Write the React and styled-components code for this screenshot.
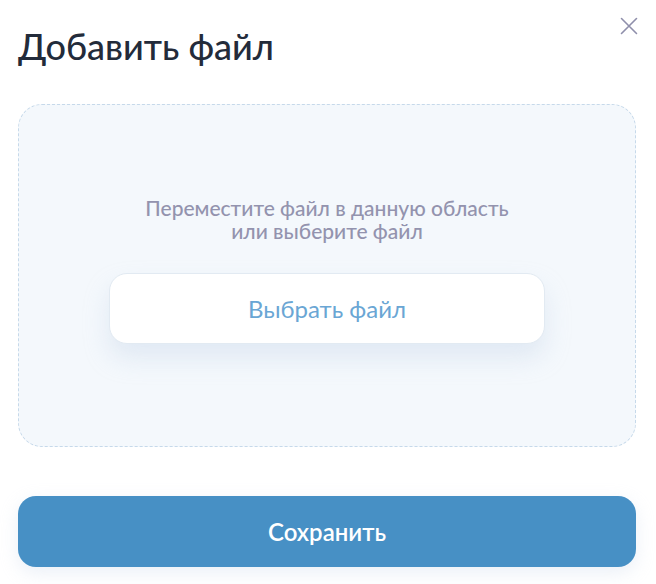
import React from "react";
import styled, { createGlobalStyle } from "styled-components";

// STYLES

const GlobalStyle = createGlobalStyle`
  body {
    margin: 0;
    background: #ffffff;
    font-family: Lato, "Noto Sans", sans-serif;
  }
`;

const Modal = styled.div`
  position: relative;
  width: 656px;
  height: 584px;
  box-sizing: border-box;
  padding: 24px 20px 0 18px;
  display: flex;
  flex-direction: column;
`;

const Title = styled.h1`
  margin: 0;
  font-size: 36px;
  line-height: 44px;
  font-weight: 500;
  color: #232b3a;
`;

const CloseBtn = styled.button`
  position: absolute;
  top: 15px;
  right: 16px;
  width: 22px;
  height: 22px;
  padding: 0;
  border: none;
  background: none;
  cursor: pointer;
  display: flex;
  align-items: center;
  justify-content: center;
`;

const DropZone = styled.div`
  margin-top: 36px;
  height: 343px;
  box-sizing: border-box;
  border: 1px dashed #c6d9ea;
  border-radius: 24px;
  background: #f4f8fc;
  display: flex;
  flex-direction: column;
  align-items: center;
  padding-top: 91px;
`;

const Hint = styled.p`
  margin: 0;
  font-size: 21px;
  line-height: 23px;
  font-weight: 500;
  color: #9393ae;
  text-align: center;
`;

const PickBtn = styled.button`
  margin-top: 31px;
  width: 436px;
  height: 71px;
  border: 1px solid #e2eaf2;
  border-radius: 18px;
  background: #ffffff;
  box-shadow: 0 14px 24px rgba(190, 205, 230, 0.35);
  font-family: inherit;
  font-size: 24px;
  color: #6aa6d4;
  cursor: pointer;
`;

const SaveBtn = styled.button`
  margin-top: 49px;
  height: 71px;
  border: none;
  border-radius: 18px;
  background: #4790c5;
  box-shadow: 0 6px 18px rgba(190, 205, 230, 0.3);
  font-family: inherit;
  font-size: 24px;
  font-weight: 600;
  color: #ffffff;
  cursor: pointer;
`;

// COMPONENT

const App = () => (
  <>
    <GlobalStyle />
    <Modal>
      <Title>Добавить файл</Title>
      <CloseBtn type="button" aria-label="Закрыть">
        <svg width="18" height="18" viewBox="0 0 18 18">
          <path
            d="M1.5 1.5 L16.5 16.5 M16.5 1.5 L1.5 16.5"
            stroke="#8f8fab"
            strokeWidth="1.6"
            strokeLinecap="round"
          />
        </svg>
      </CloseBtn>
      <DropZone>
        <Hint>
          Переместите файл в данную область
          <br />
          или выберите файл
        </Hint>
        <PickBtn type="button">Выбрать файл</PickBtn>
      </DropZone>
      <SaveBtn type="button">Сохранить</SaveBtn>
    </Modal>
  </>
);

export default App;
